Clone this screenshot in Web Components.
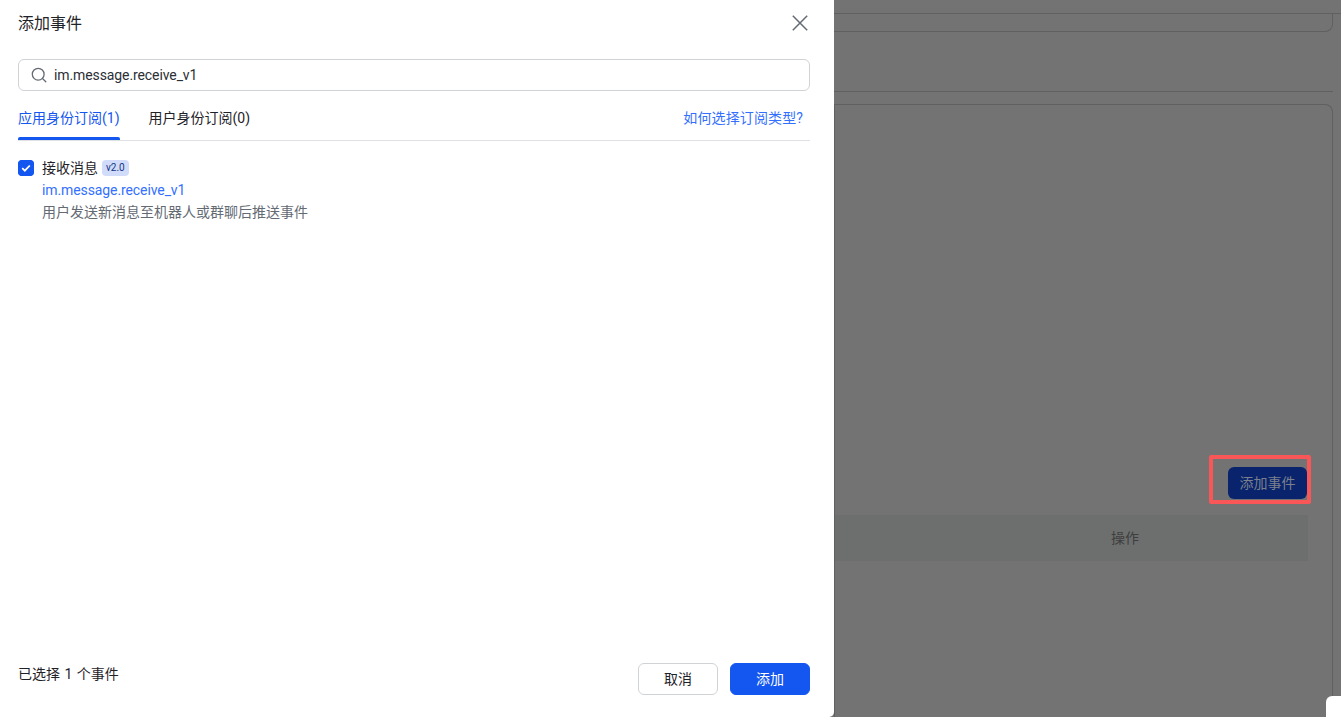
<!DOCTYPE html>
<html lang="zh">
<head>
<meta charset="utf-8">
<style>
html,body{margin:0;padding:0;height:100%;overflow:hidden}
body{font-family:"Roboto","Noto Sans CJK SC",sans-serif;font-size:14px;background:#737373}
</style>
</head>
<body>
<event-page>
  <event-drawer slot="drawer" heading="添加事件">
    <search-box value="im.message.receive_v1"></search-box>
    <sub-tabs></sub-tabs>
    <event-item name="接收消息" version="v2.0" code="im.message.receive_v1" desc="用户发送新消息至机器人或群聊后推送事件"></event-item>
    <span slot="count">已选择 1 个事件</span>
    <ui-button slot="actions">取消</ui-button>
    <ui-button slot="actions" primary>添加</ui-button>
  </event-drawer>
</event-page>
<script>
function def(name, css, html){
  customElements.define(name, class extends HTMLElement{
    connectedCallback(){
      if(this.shadowRoot) return;
      const s=this.attachShadow({mode:'open'});
      s.innerHTML='<style>'+css+'</style>'+(typeof html==='function'?html(this):html);
    }
  });
}
def('event-page',`
:host{display:block;position:relative;width:1341px;height:717px;overflow:hidden;background:#737373;box-sizing:border-box;font-family:"Roboto","Noto Sans CJK SC",sans-serif}
.strip{height:13px;border-bottom:1px solid #5f6060}
.main{padding-left:834px;width:1333px;box-sizing:border-box;height:703px}
.box{height:17px;border-bottom:1px solid #5f6060;border-right:1px solid #5f6060;border-radius:0 0 8px 0}
.tabs{height:59px;border-bottom:1px solid #5f6060}
.card{margin-top:12px;height:620px;border:1px solid #5f6060;border-bottom:0;border-radius:0 8px 0 0;box-sizing:border-box;padding:362px 24px 0 0;display:flex;flex-direction:column;align-items:flex-end}
.toolbar{position:relative;display:block;height:32px;margin-right:1px}
.add{display:block;width:79px;height:32px;line-height:32px;text-align:center;background:#09246c;color:#7b818c;border-radius:6px;font-size:14px}
.mark{position:absolute;left:-19px;top:-12px;width:102px;height:49px;box-sizing:border-box;border:4px solid #f95658;border-radius:2px}
.thead{margin-top:16px;width:100%;height:46px;background:#6d6f6e;display:flex;justify-content:flex-end}
.op{width:366px;text-align:center;line-height:46px;color:#3d3e3e;font-size:14px}
.corner{position:absolute;right:0;bottom:0;width:15px;height:21px;background:#fff;border-top-left-radius:6px}
::slotted(event-drawer){position:absolute;left:0;top:0}
`,`<div class="strip"></div>
<div class="main">
  <div class="box"></div>
  <div class="tabs"></div>
  <div class="card">
    <div class="toolbar"><span class="add">添加事件</span><span class="mark"></span></div>
    <div class="thead"><div class="op">操作</div></div>
  </div>
</div>
<div class="corner"></div>
<slot name="drawer"></slot>`);

def('event-drawer',`
:host{display:flex;flex-direction:column;width:834px;height:717px;background:#fff;border-radius:0 0 5px 0;box-sizing:border-box;padding:0 24px 22px 18px;color:#1f2329}
.head{display:flex;align-items:center;justify-content:space-between;height:46px}
.title{font-size:16px;color:#1f2329;margin-top:-2px}
.close{display:block;width:16px;height:16px;margin-right:2px}
.body{flex:1;padding-top:13px}
.foot{display:flex;align-items:flex-start;justify-content:space-between}
.count{line-height:22px;font-size:14px;word-spacing:1px}
.actions{display:flex;gap:12px}
`,h=>`<div class="head"><span class="title">${h.getAttribute('heading')}</span>
<svg class="close" viewBox="0 0 16 16" fill="none" stroke="#646a73" stroke-width="1.5"><path d="M.8.8l14.4 14.4M15.2.8L.8 15.2"/></svg></div>
<div class="body"><slot></slot></div>
<div class="foot"><span class="count"><slot name="count"></slot></span><span class="actions"><slot name="actions"></slot></span></div>`);

def('search-box',`
:host{display:flex;align-items:center;height:32px;box-sizing:border-box;border:1px solid #d0d3d6;border-radius:6px;padding-left:12px;gap:7px;font-size:14px;color:#2b2f36;letter-spacing:-.1px}
svg{display:block;width:16px;height:16px;flex:none}
`,h=>`<svg viewBox="0 0 16 16" fill="none" stroke="#646a73" stroke-width="1.3"><circle cx="7.2" cy="7.2" r="5.9"/><path d="M11.5 11.5l3.3 3.3" stroke-linecap="round"/></svg><span>${h.getAttribute('value')}</span>`);

def('sub-tabs',`
:host{display:flex;align-items:flex-start;height:50px;box-sizing:border-box;border-bottom:1px solid #dee0e3;font-size:14px;line-height:20px;padding-top:17px}
.t{position:relative;height:32px;margin-right:29px;color:#1f2329;white-space:nowrap}
.on{color:#1456f0}
.on::after{content:"";position:absolute;left:0;right:0;bottom:0;height:3px;background:#1456f0;border-radius:2px 2px 0 0}
.link{margin-left:auto;margin-right:7px;color:#3370ff;letter-spacing:.12px}
`,`<span class="t on">应用身份订阅(1)</span><span class="t">用户身份订阅(0)</span><span class="link">如何选择订阅类型?</span>`);

def('event-item',`
:host{display:grid;grid-template-columns:16px 1fr;column-gap:8px;padding-top:19px;font-size:14px}
.cb{width:16px;height:16px;border-radius:4px;background:#1456f0;display:block}
.top{display:flex;align-items:center;height:16px;gap:4px;color:#1f2329;font-size:14px}
.top span:first-child{position:relative;top:-1px}
.badge{display:inline-block;height:16px;line-height:16px;padding:0 4px;border-radius:4px;background:#d1dcfa;color:#14357f;font-size:10px;font-weight:400}
.code{grid-column:2;color:#3370ff;line-height:22px;margin-top:3px;letter-spacing:-.1px}
.desc{grid-column:2;color:#646a73;line-height:22px}
`,h=>`<svg class="cb" viewBox="0 0 16 16"><rect width="16" height="16" rx="4" fill="#1456f0"/><path d="M4.2 8.2l2.6 2.5 5-5.2" fill="none" stroke="#fff" stroke-width="1.8"/></svg>
<div class="top"><span>${h.getAttribute('name')}</span><span class="badge">${h.getAttribute('version')}</span></div>
<div class="code">${h.getAttribute('code')}</div>
<div class="desc">${h.getAttribute('desc')}</div>`);

def('ui-button',`
:host{display:block;width:80px;height:32px;box-sizing:border-box;border:1px solid #d0d3d6;border-radius:6px;background:#fff;color:#1f2329;text-align:center;line-height:30px;font-size:14px}
:host([primary]){background:#1456f0;border-color:#1456f0;color:#fff}
`,`<slot></slot>`);
</script>
</body>
</html>
